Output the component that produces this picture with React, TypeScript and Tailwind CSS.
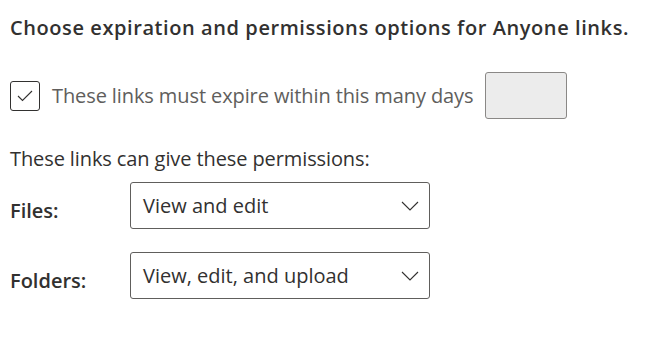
import React from "react";

function Chevron() {
  return (
    <svg width="18" height="10" viewBox="0 0 18 10" fill="none">
      <path d="M1 1 L9 9 L17 1" stroke="#323130" strokeWidth="1.1" />
    </svg>
  );
}

function Select({ value }: { value: string }) {
  return (
    <div className="w-[300px] h-[47px] border border-[#605e5c] rounded-[3px] bg-white flex items-center justify-between pl-[12px] pr-[10px] text-[20px] text-[#323130]">
      <span>{value}</span>
      <Chevron />
    </div>
  );
}

export default function App() {
  return (
    <div
      className="w-[646px] h-[339px] bg-white px-[10px] pt-[12px]"
      style={{ fontFamily: '"Open Sans", "Noto Sans", sans-serif' }}
    >
      <h1 className="text-[20px] font-semibold text-[#323130] leading-[32px] tracking-[0.58px]">
        Choose expiration and permissions options for Anyone links.
      </h1>
      <div className="mt-[28px] flex items-center h-[47px]">
        <div className="w-[30px] h-[30px] border border-[#323130] rounded-[3px] flex items-center justify-center">
          <svg width="16" height="12" viewBox="0 0 16 12" fill="none">
            <path d="M1 6 L5.5 10.5 L15 1" stroke="#323130" strokeWidth="1.1" />
          </svg>
        </div>
        <span className="ml-[12px] text-[20px] text-[#605e5c] tracking-[-0.1px]">
          These links must expire within this many days
        </span>
        <div className="ml-[12px] w-[82px] h-[47px] bg-[#ececec] border border-[#8a8886] rounded-[3px]" />
      </div>
      <div className="mt-[26px] text-[20px] text-[#323130] leading-[28px] tracking-[-0.1px]">
        These links can give these permissions:
      </div>
      <div className="mt-[9px] flex items-center">
        <span className="w-[120px] text-[20px] font-semibold text-[#323130] pt-[10px]">Files:</span>
        <Select value="View and edit" />
      </div>
      <div className="mt-[23px] flex items-center">
        <span className="w-[120px] text-[20px] font-semibold text-[#323130] pt-[10px]">Folders:</span>
        <Select value="View, edit, and upload" />
      </div>
    </div>
  );
}
